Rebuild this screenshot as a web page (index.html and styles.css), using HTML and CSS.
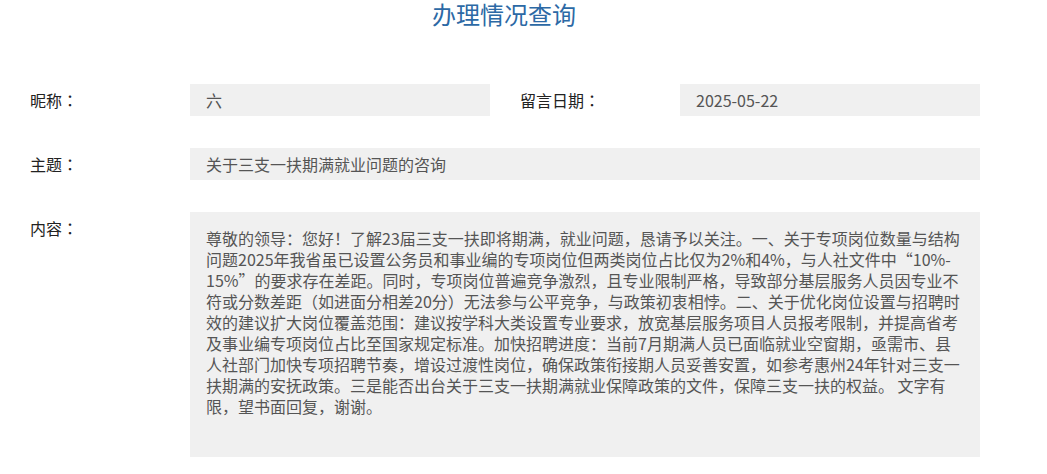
FILE: index.html
```html
<!DOCTYPE html>
<html lang="zh-CN">
<head>
    <meta charset="UTF-8">
    <title>办理情况查询</title>
    <link rel="stylesheet" href="styles.css">
</head>
<body>

<!--查询结果-->
<div class="page">
    <h2 class="title">办理情况查询</h2>

    <div class="row">
        <div class="label">昵称：</div>
        <div class="field">六</div>
        <div class="label">留言日期：</div>
        <div class="field">2025-05-22</div>
    </div>

    <div class="row">
        <div class="label">主题：</div>
        <div class="field wide">关于三支一扶期满就业问题的咨询</div>
    </div>

    <div class="row">
        <div class="label">内容：</div>
        <div class="field wide content">尊敬的领导：您好！了解23届三支一扶即将期满，就业问题，恳请予以关注。一、关于专项岗位数量与结构问题2025年我省虽已设置公务员和事业编的专项岗位但两类岗位占比仅为2%和4%，与人社文件中“10%-<wbr>15%”的要求存在差距。同时，专项岗位普遍竞争激烈，且专业限制严格，导致部分基层服务人员因专业不符或分数差距（如进面分相差20分）无法参与公平竞争，与政策初衷相悖。二、关于优化岗位设置与招聘时效的建议扩大岗位覆盖范围：建议按学科大类设置专业要求，放宽基层服务项目人员报考限制，并提高省考及事业编专项岗位占比至国家规定标准。加快招聘进度：当前7月期满人员已面临就业空窗期，亟需市、县人社部门加快专项招聘节奏，增设过渡性岗位，确保政策衔接期人员妥善安置，如参考惠州24年针对三支一扶期满的安抚政策。三是能否出台关于三支一扶期满就业保障政策的文件，保障三支一扶的权益。 文字有限，望书面回复，谢谢。</div>
    </div>
</div>

</body>
</html>
```

FILE: styles.css
```css
* {
    margin: 0;
    padding: 0
}

body {
    font-family: "Noto Sans CJK SC", "Liberation Sans", sans-serif;
    font-size: 16px;
    color: #222;
    background-color: #fff;
}

.page {
    width: 1008px;
}

.title {
    font-size: 24px;
    font-weight: normal;
    line-height: 28px;
    color: #2c69a5;
    text-align: center;
    margin-bottom: 56px;
}

.row {
    display: flex;
    align-items: flex-start;
    margin-bottom: 32px;
}

/* 标签的冒号居中显示 */
.label {
    width: 190px;
    padding-left: 30px;
    box-sizing: border-box;
    line-height: 32px;
    font-family: "Noto Sans CJK TC", "Noto Sans CJK SC", sans-serif;
    font-feature-settings: "locl" 0;
}

.field {
    width: 300px;
    height: 32px;
    line-height: 32px;
    padding: 0 16px;
    box-sizing: border-box;
    background-color: #f0f0f0;
    color: #555;
}

.field.wide {
    width: 790px;
}

.field.content {
    height: 245px;
    line-height: 21px;
    padding: 16px 16px;
}
```
